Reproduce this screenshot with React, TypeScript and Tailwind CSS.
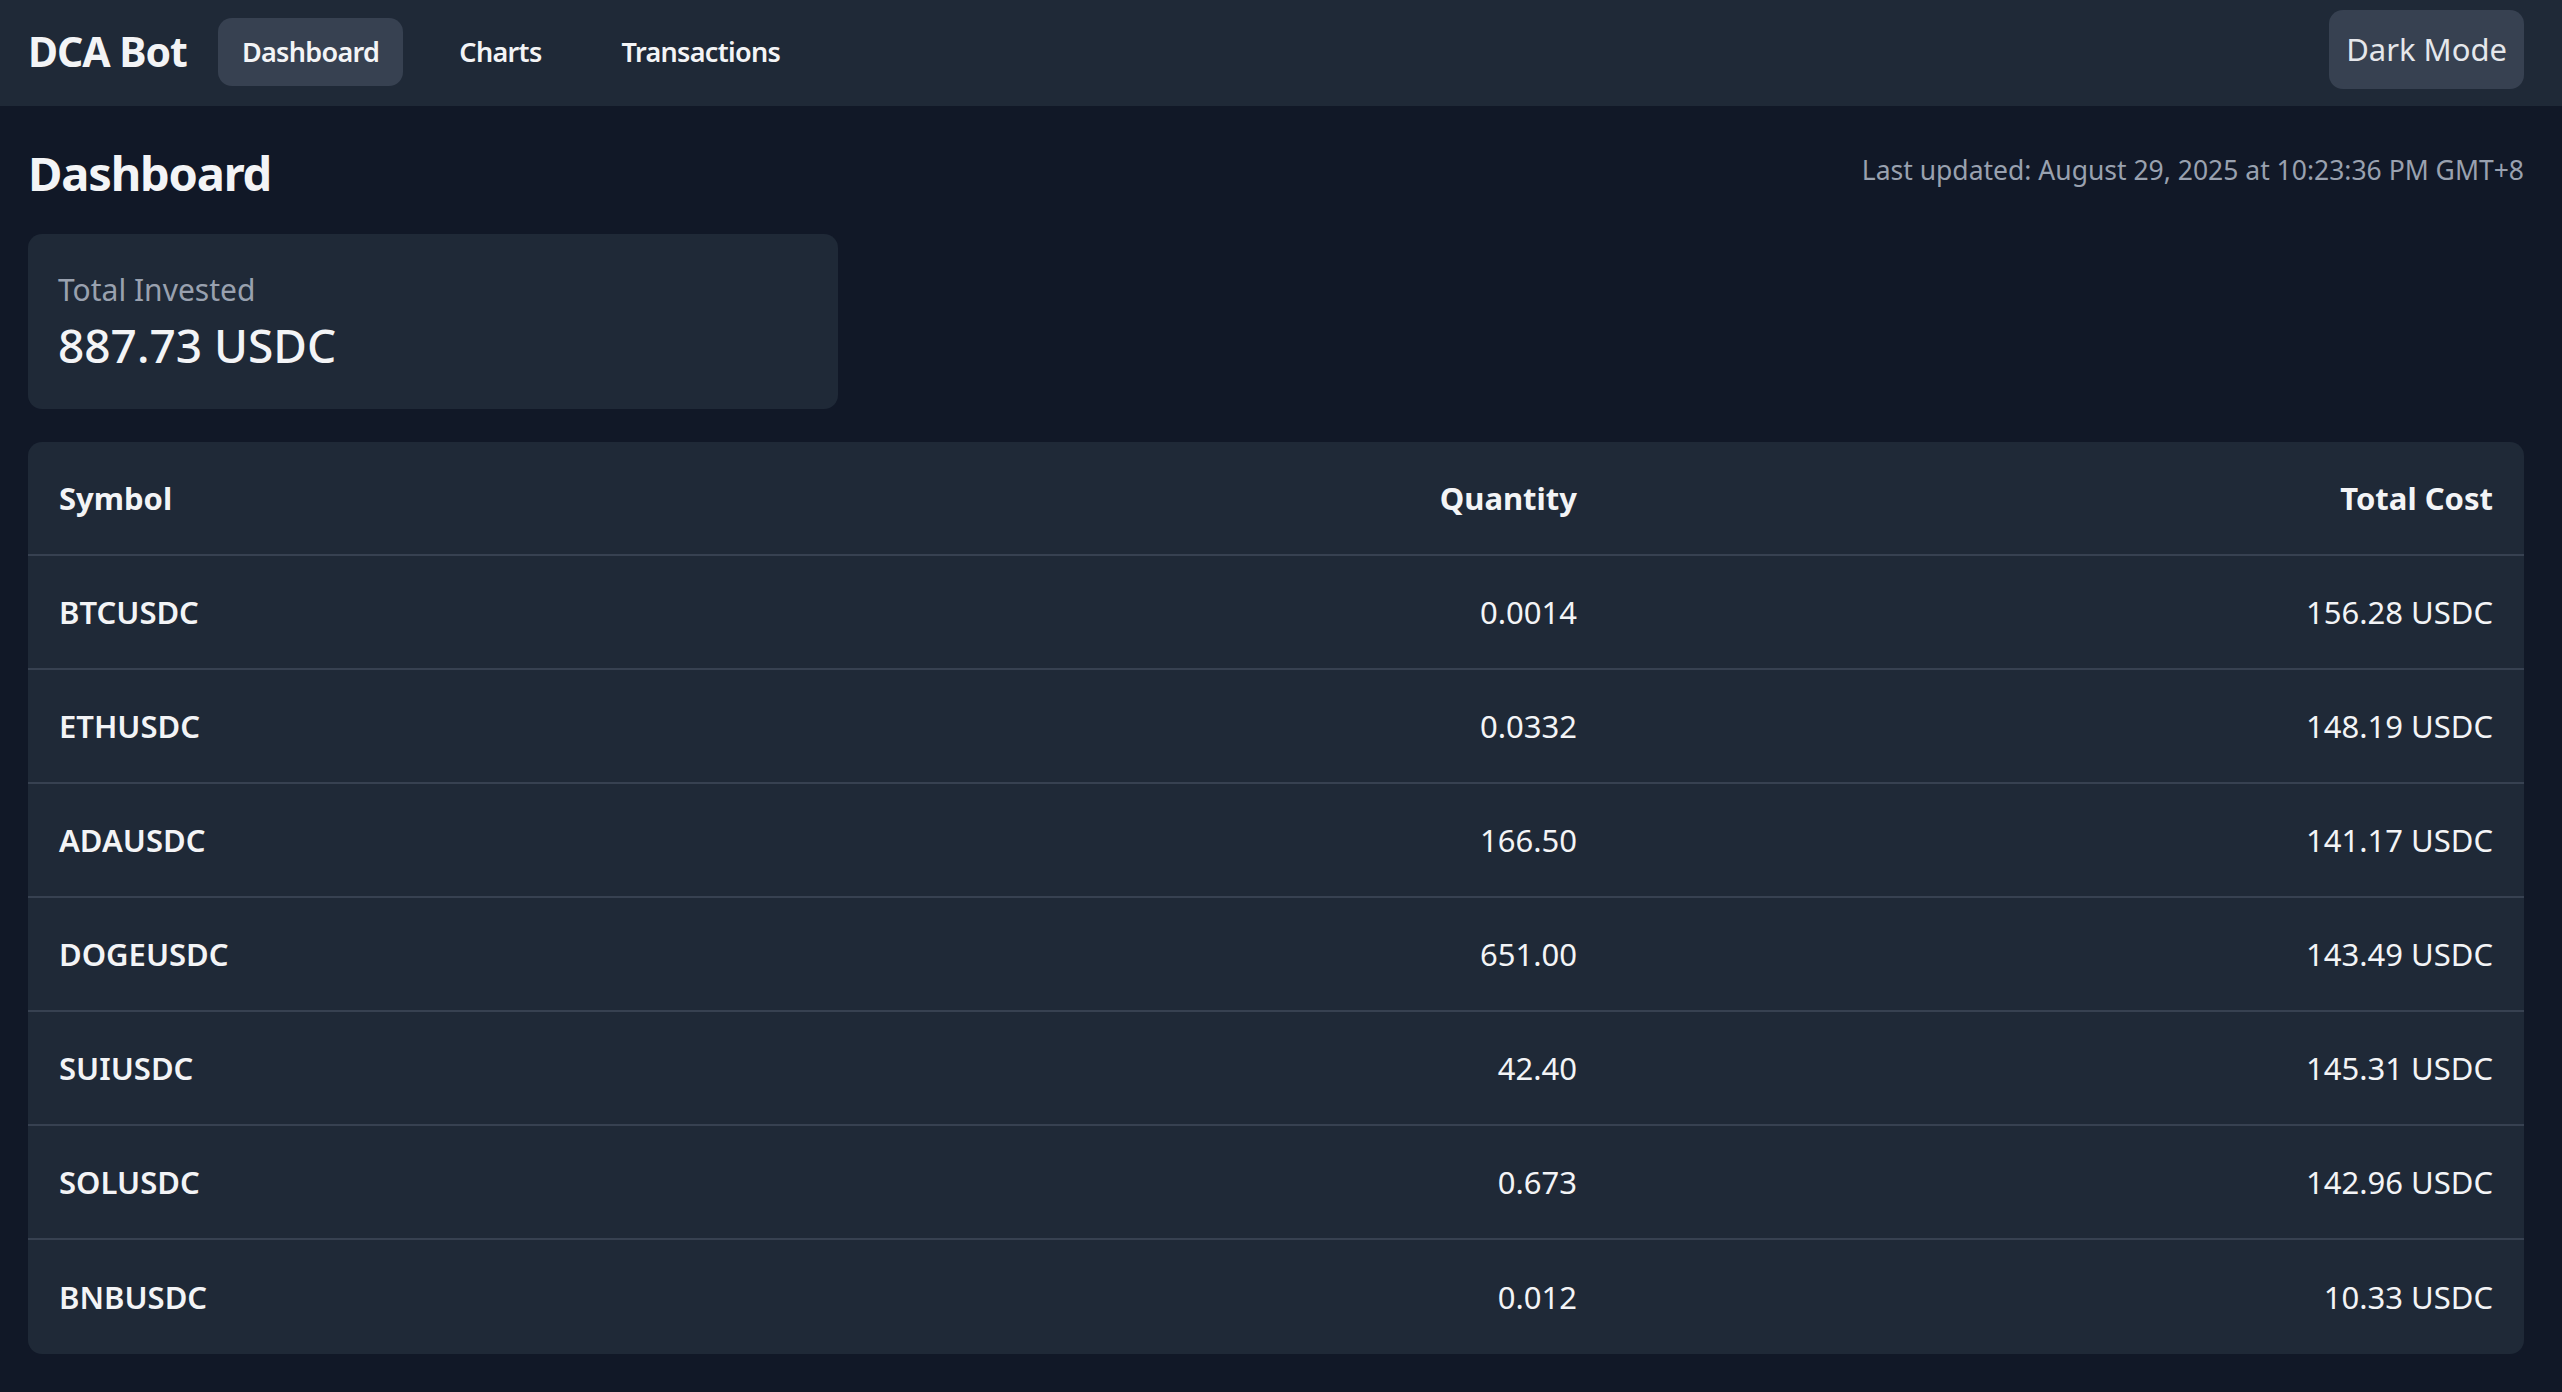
import React from 'react';

interface Holding {
  symbol: string;
  quantity: string;
  totalCost: string;
}

const holdings: Holding[] = [
  { symbol: 'BTCUSDC', quantity: '0.0014', totalCost: '156.28 USDC' },
  { symbol: 'ETHUSDC', quantity: '0.0332', totalCost: '148.19 USDC' },
  { symbol: 'ADAUSDC', quantity: '166.50', totalCost: '141.17 USDC' },
  { symbol: 'DOGEUSDC', quantity: '651.00', totalCost: '143.49 USDC' },
  { symbol: 'SUIUSDC', quantity: '42.40', totalCost: '145.31 USDC' },
  { symbol: 'SOLUSDC', quantity: '0.673', totalCost: '142.96 USDC' },
  { symbol: 'BNBUSDC', quantity: '0.012', totalCost: '10.33 USDC' },
];

const navItems = ['Dashboard', 'Charts', 'Transactions'];

export default function App() {
  return (
    <div className="min-h-screen bg-[#111827] text-gray-100 font-['Segoe_UI','Noto_Sans',sans-serif]">
      {/* Top bar */}
      <header className="h-[106px] bg-[#1f2937] pl-[28px] pr-[38px] pb-[3px] flex items-center justify-between">
        <div className="flex items-center">
          <span className="text-[41px] font-bold tracking-tight mr-[31px]">DCA Bot</span>
          <nav className="flex items-center gap-[32px]">
            {navItems.map((item) => (
              <button
                key={item}
                className={`h-[68px] px-[24px] pt-[2px] rounded-[14px] text-[27px] font-semibold tracking-tight ${
                  item === 'Dashboard' ? 'bg-[#374151]' : ''
                }`}
              >
                {item}
              </button>
            ))}
          </nav>
        </div>
        <button className="h-[79px] px-[17px] rounded-[14px] bg-[#374151] text-[31px] text-gray-200 -mt-[4px]">
          Dark Mode
        </button>
      </header>

      <main className="pl-[28px] pr-[38px] pt-[23px] pb-[41px]">
        {/* Title row */}
        <div className="flex items-center justify-between h-[88px]">
          <h1 className="text-[47px] font-bold tracking-tight">Dashboard</h1>
          <span className="text-[26.5px] text-gray-400 mb-[4px]">
            Last updated: August 29, 2025 at 10:23:36 PM GMT+8
          </span>
        </div>

        {/* Summary card */}
        <div className="mt-[17px] w-[810px] h-[175px] rounded-[14px] bg-[#1f2937] px-[30px] flex flex-col justify-center">
          <div className="text-[30px] text-gray-400 leading-[42px]">Total Invested</div>
          <div className="mt-[5px] text-[46px] font-medium leading-[58px]">887.73 USDC</div>
        </div>

        {/* Holdings table */}
        <div className="mt-[33px] rounded-[14px] bg-[#1f2937] overflow-hidden">
          <div className="grid grid-cols-[1fr_1fr_916px] h-[114px] items-center border-b-2 border-[#374151] px-[31px] text-[31px] font-bold">
            <div>Symbol</div>
            <div className="text-right">Quantity</div>
            <div className="text-right">Total Cost</div>
          </div>
          {holdings.map((h, i) => (
            <div
              key={h.symbol}
              className={`grid grid-cols-[1fr_1fr_916px] h-[114px] items-center px-[31px] text-[31px] ${
                i < holdings.length - 1 ? 'border-b-2 border-[#374151]' : ''
              }`}
            >
              <div className="font-semibold">{h.symbol}</div>
              <div className="text-right">{h.quantity}</div>
              <div className="text-right">{h.totalCost}</div>
            </div>
          ))}
        </div>
      </main>
    </div>
  );
}
